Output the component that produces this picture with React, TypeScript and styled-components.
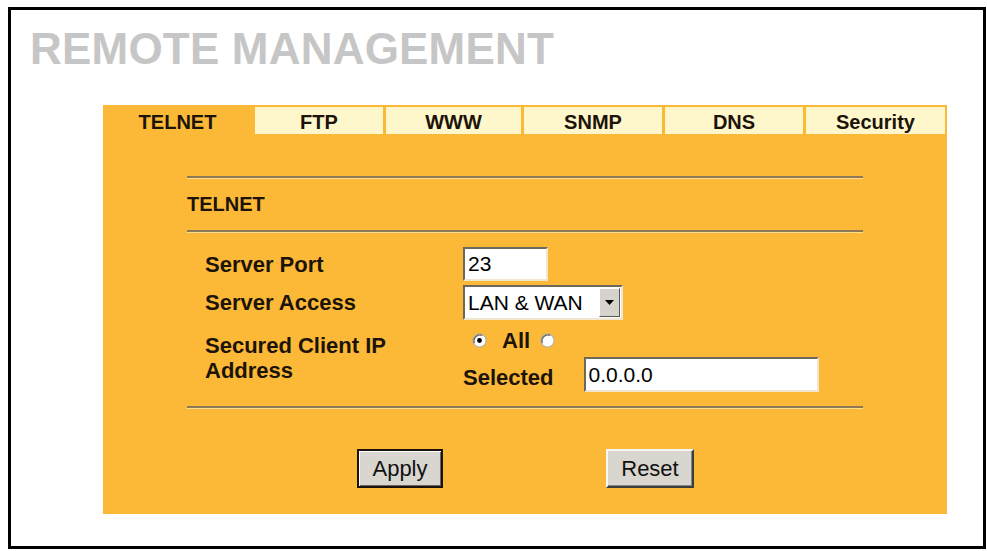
import React from "react";
import styled, { createGlobalStyle } from "styled-components";

const ORANGE = "#fbb937";
const PALE = "#fff7cc";
const INK = "#1c1309";

const GlobalStyle = createGlobalStyle`
  body {
    margin: 0;
    background: #ffffff;
    font-family: "Liberation Sans", Arial, sans-serif;
  }
`;

const tabs = [
  { label: "TELNET", width: 149 },
  { label: "FTP", width: 128 },
  { label: "WWW", width: 135 },
  { label: "SNMP", width: 138 },
  { label: "DNS", width: 138 },
  { label: "Security", width: 139 },
];

function Radio({ checked }: { checked?: boolean }) {
  return (
    <RadioIcon width="15" height="15" viewBox="0 0 15 15">
      <circle cx="7.5" cy="7.5" r="6.6" fill="#ffffff" stroke="#b4b0a8" strokeWidth="1.2" />
      <path d="M2.4 10.2 A6 6 0 0 1 10.2 2.4" fill="none" stroke="#6a665e" strokeWidth="1.3" />
      {checked && <circle cx="7.5" cy="7.5" r="2.4" fill="#000000" />}
    </RadioIcon>
  );
}

export default function App() {
  return (
    <>
      <GlobalStyle />
      <Frame>
        <Title>REMOTE MANAGEMENT</Title>
        <Panel>
          <TabRow>
            {tabs.map((t, i) => (
              <Tab key={t.label} $width={t.width} $active={i === 0}>
                {t.label}
              </Tab>
            ))}
          </TabRow>
          <Section>
            <Rule />
            <Header>TELNET</Header>
            <Rule />
            <FormGrid>
              <Label>Server Port</Label>
              <TextBox $width={85} defaultValue="23" />
              <Label>Server Access</Label>
              <SelectBox>
                <SelectText>LAN &amp; WAN</SelectText>
                <ArrowButton>
                  <svg width="9" height="5" viewBox="0 0 9 5">
                    <path d="M0 0 H9 L4.5 5 Z" fill="#000" />
                  </svg>
                </ArrowButton>
              </SelectBox>
              <Label $top={9}>
                Secured Client IP
                <br />
                Address
              </Label>
              <Controls>
                <RadioRow>
                  <Radio checked />
                  <RadioText>All</RadioText>
                  <Radio />
                </RadioRow>
                <SelectedRow>
                  <InlineLabel>Selected</InlineLabel>
                  <TextBox $width={235} defaultValue="0.0.0.0" />
                </SelectedRow>
              </Controls>
            </FormGrid>
            <Rule $top={14} />
            <ButtonRow>
              <Button $primary $width={86}>Apply</Button>
              <Button $width={88}>Reset</Button>
            </ButtonRow>
          </Section>
        </Panel>
      </Frame>
    </>
  );
}

const Frame = styled.div`
  margin: 7px 0 0 8px;
  width: 978px;
  height: 542px;
  border: 3px solid #000;
  box-sizing: border-box;
`;

const Title = styled.div`
  padding: 17px 0 0 19px;
  font-size: 44px;
  line-height: 44px;
  font-weight: bold;
  color: #c6c6c6;
  letter-spacing: 0.2px;
`;

const Panel = styled.div`
  margin: 34px 0 0 92px;
  width: 844px;
  height: 409px;
  background: ${ORANGE};
  box-sizing: border-box;
`;

const TabRow = styled.div`
  display: flex;
  gap: 3px;
  padding-top: 2px;
`;

const Tab = styled.div<{ $width: number; $active?: boolean }>`
  width: ${(p) => p.$width}px;
  height: 27px;
  padding-top: 3px;
  box-sizing: border-box;
  display: flex;
  align-items: center;
  justify-content: center;
  background: ${(p) => (p.$active ? "transparent" : PALE)};
  font-size: 20px;
  font-weight: bold;
  color: ${INK};
`;

const Section = styled.div`
  margin: 42px 0 0 84px;
  width: 676px;
`;

const Rule = styled.div<{ $top?: number }>`
  margin-top: ${(p) => p.$top ?? 0}px;
  height: 0;
  border-top: 2px solid #8d7a55;
  border-bottom: 1px solid #ffdb8e;
`;

const Header = styled.div`
  margin: 13px 0 14px;
  font-size: 20px;
  line-height: 24px;
  font-weight: bold;
  color: ${INK};
`;

const FormGrid = styled.div`
  margin-top: 14px;
  padding-left: 18px;
  display: grid;
  grid-template-columns: 258px 1fr;
  row-gap: 4px;
  align-items: center;
`;

const Label = styled.div<{ $top?: number }>`
  align-self: ${(p) => (p.$top ? "start" : "center")};
  margin-top: ${(p) => p.$top ?? 0}px;
  font-size: 22px;
  line-height: 25px;
  font-weight: bold;
  color: ${INK};
`;

const InlineLabel = styled.span`
  padding-top: 6px;
  font-size: 22px;
  font-weight: bold;
  color: ${INK};
`;

const TextBox = styled.input<{ $width: number }>`
  width: ${(p) => p.$width}px;
  height: 34px;
  box-sizing: border-box;
  padding: 0 3px;
  font-family: "Liberation Sans", Arial, sans-serif;
  font-size: 21px;
  color: #000;
  background: #fff;
  border-style: solid;
  border-width: 2px;
  border-color: #6d675c #f1e6cf #f1e6cf #6d675c;
  outline: none;
`;

const SelectBox = styled.div`
  width: 160px;
  height: 35px;
  box-sizing: border-box;
  display: flex;
  align-items: stretch;
  background: #fff;
  border-style: solid;
  border-width: 2px;
  border-color: #6d675c #f1e6cf #f1e6cf #6d675c;
`;

const SelectText = styled.div`
  flex: 1;
  display: flex;
  align-items: center;
  padding-left: 3px;
  font-size: 21px;
  color: #000;
  white-space: nowrap;
`;

const ArrowButton = styled.div`
  width: 21px;
  margin: 1px;
  box-sizing: border-box;
  display: flex;
  align-items: center;
  justify-content: center;
  background: #d6d3cc;
  border-style: solid;
  border-width: 1px;
  border-color: #fff #555 #555 #fff;
`;

const Controls = styled.div`
  display: flex;
  flex-direction: column;
`;

const RadioRow = styled.div`
  height: 33px;
  padding-left: 9px;
  display: flex;
  align-items: center;
`;

const RadioIcon = styled.svg`
  display: block;
`;

const RadioText = styled.span`
  margin: 0 10px 0 15px;
  font-size: 22px;
  font-weight: bold;
  color: ${INK};
`;

const SelectedRow = styled.div`
  display: flex;
  align-items: center;
  gap: 30px;

  input {
    height: 35px;
  }
`;

const ButtonRow = styled.div`
  margin-top: 40px;
  padding-left: 170px;
  display: flex;
  gap: 163px;
`;

const Button = styled.button<{ $primary?: boolean; $width: number }>`
  width: ${(p) => p.$width}px;
  height: 39px;
  box-sizing: border-box;
  padding: 0;
  font-family: "Liberation Sans", Arial, sans-serif;
  font-size: 22px;
  color: #111;
  background: #d9d6cf;
  border: ${(p) => (p.$primary ? "2px solid #1a1208" : "2px solid")};
  border-color: ${(p) => (p.$primary ? "#1a1208" : "#f6f6f6 #3d3d3d #3d3d3d #f6f6f6")};
  box-shadow: ${(p) =>
    p.$primary ? "inset 1px 1px 0 #fff, inset -1px -1px 0 #666" : "inset -1px -1px 0 #888"};
`;
